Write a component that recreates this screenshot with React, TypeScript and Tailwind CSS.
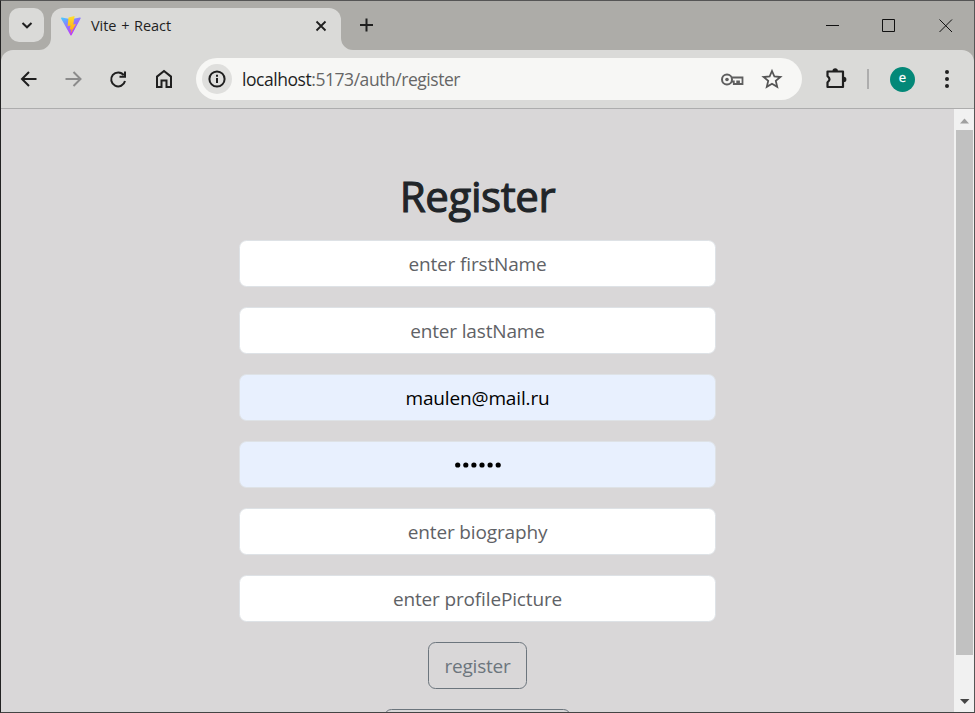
import type { ReactNode } from "react";

function Icon({ className = "", size = 24, children }: { className?: string; size?: number; children: ReactNode }) {
  return (
    <svg
      width={size}
      height={size}
      viewBox={`0 0 ${size} ${size}`}
      fill="none"
      stroke="currentColor"
      strokeWidth="2"
      className={`block shrink-0 ${className}`}
    >
      {children}
    </svg>
  );
}

function ViteLogo() {
  return (
    <svg width="20" height="20" viewBox="0 0 20 20" className="ml-[10px] block shrink-0">
      <defs>
        <linearGradient id="vite-body" x1="0" y1="0" x2="0.6" y2="1">
          <stop offset="0" stopColor="#41d1ff" />
          <stop offset="0.45" stopColor="#8f7bff" />
          <stop offset="1" stopColor="#c32bfa" />
        </linearGradient>
        <linearGradient id="vite-bolt" x1="0" y1="0" x2="0" y2="1">
          <stop offset="0" stopColor="#ffe02e" />
          <stop offset="1" stopColor="#ffa011" />
        </linearGradient>
      </defs>
      <path d="M19.6 2.5 10.5 19.2Q10 20 9.5 19.2L.1 2.6Q-.2 1.5.9 1.6L10 3.2 18.9 1.6Q20.2 1.4 19.6 2.5Z" fill="url(#vite-body)" />
      <path d="M13.6.1 7.5 1.4 6.6 10.200l2.900-.6-.9 4.200 2-.5-1.200 4.600 5.600-9.900-2.700.4Z" fill="url(#vite-bolt)" />
    </svg>
  );
}

function TabStrip() {
  return (
    <div className="flex h-[49px] shrink-0 bg-[#adaca8] pl-2">
      <button className="mt-[7px] grid h-[34px] w-[35px] shrink-0 place-items-center rounded-[10px] bg-[#dadad8] text-[#1f1f1f]">
        <Icon size={12}><path d="M1.5 4 6 8.3 10.5 4" /></Icon>
      </button>
      <div className="relative ml-[7px] mt-[7px] flex h-[42px] w-[290px] shrink-0 rounded-t-[12px] bg-[#dadad8] text-[#1f1f1f]">
        <svg width="12" height="12" className="absolute -left-3 bottom-0"><path d="M12 0A12 12 0 0 1 0 12H12Z" fill="#dadad8" /></svg>
        <svg width="12" height="12" className="absolute -right-3 bottom-0"><path d="M0 0A12 12 0 0 0 12 12H0Z" fill="#dadad8" /></svg>
        <div className="flex h-[35px] w-full items-center">
          <ViteLogo />
          <span className="ml-[10px] whitespace-nowrap text-[14.5px] tracking-[-0.05px] [word-spacing:1px]">Vite + React</span>
          <Icon size={12} className="ml-auto mr-[14px]"><path d="m1.5 1.5 9 9m0-9-9 9" strokeWidth="1.8" /></Icon>
        </div>
      </div>
      <Icon size={14} className="ml-[18px] mt-[17px] text-[#1f1f1f]"><path d="M7.500 .5v13M1 7h13" /></Icon>
      <svg width="128" height="14" viewBox="0 0 128 14" fill="none" stroke="#111" className="ml-auto mr-[20px] mt-[18px] block shrink-0">
        <path d="M0 6.5h13M56.5.5h12v12h-12ZM113.500 .5l12.500 12.500m0-12.500-12.500 12.500" />
      </svg>
    </div>
  );
}

function Toolbar() {
  return (
    <div className="h-[59px] shrink-0 bg-[#adaca8]">
      <div className="flex h-full items-center rounded-t-[12px] border-b border-[#adadad] bg-[#dadad8] text-[#1f1f1f]">
        <Icon className="ml-4"><path d="M19.5 12H5m7-7-7 7 7 7" /></Icon>
        <Icon className="ml-[20px] text-[#8b8b8b]"><path d="M4.500 12h15m-7-7 7 7-7 7" /></Icon>
        <Icon className="ml-[21px]"><path d="M17.8 8.2A7 7 0 1 0 19 14M19 4.5v5.2h-5.5" /></Icon>
        <Icon className="ml-[21.5px]"><path d="M5 9.6 12 4l7 5.6V20h-4.500v-6.500h-5V20H5Z" /></Icon>
        <div className="ml-[20.5px] flex h-[42px] w-[606px] shrink-0 items-center rounded-full bg-[#f7f7f5]">
          <div className="ml-[6px] grid h-[30px] w-[30px] place-items-center rounded-full bg-[#dfdfdd]">
            <Icon size={18}><circle cx="9" cy="9" r="7.6" /><path d="M9 8v5M9 4.8v1.9" /></Icon>
          </div>
          <span className="ml-[10px] whitespace-nowrap text-[17.5px] tracking-[-0.45px] text-[#666]">
            <span className="text-[#1f1f1f]">localhost</span>:5173/auth/register
          </span>
          <Icon className="ml-auto text-[#5f5f5f]">
            <circle cx="7" cy="12.500" r="5" />
            <circle cx="7" cy="12.500" r="1.8" fill="currentColor" stroke="none" />
            <path d="M11.500 10.500H22.500v6.500h-3.500v-2.500h-1.8v2.500h-3.400v-2.500h-2.3" strokeWidth="1.8" />
          </Icon>
          <Icon className="ml-[16px] mr-[18px] text-[#555]">
            <path d="m12 4 2.4 5.5 6 .5-4.600 3.900 1.4 5.900-5.200-3.100-5.200 3.100 1.4-5.900L3.600 10l6-.5Z" strokeWidth="1.8" />
          </Icon>
        </div>
        <Icon className="ml-[22px]">
          <path d="M3.500 4.500h15.500v15.500H3.500v-4.700q4-3.100 0-6.200Z" strokeWidth="2.2" strokeLinejoin="round" />
          <path d="M8.500 4a2.700 2.700 0 0 1 5.400 0ZM19.800 9.800a2.600 2.600 0 0 1 0 5.200Z" fill="currentColor" stroke="none" />
        </Icon>
        <div className="ml-[19px] h-5 w-[2px] bg-[#adadad]" />
        <div className="ml-[21px] grid h-[25px] w-[25px] shrink-0 place-items-center rounded-full bg-[#048878] text-[13px] leading-none text-white">
          <span className="-mt-[3px] [-webkit-text-stroke:0.3px_white]">e</span>
        </div>
        <Icon className="ml-5">
          <g fill="currentColor" stroke="none"><circle cx="12" cy="5" r="2" /><circle cx="12" cy="12" r="2" /><circle cx="12" cy="19" r="2" /></g>
        </Icon>
      </div>
    </div>
  );
}

const inputBase =
  "block h-[47px] w-[477px] rounded-[7.5px] border border-[#dee2e6] px-4 pt-[1px] text-center text-[19px] tracking-[-0.15px] outline-none placeholder:text-[#5f6266] placeholder:opacity-100";

function RegisterForm() {
  return (
    <form className="flex min-w-0 flex-1 flex-col items-center overflow-hidden bg-[#d9d7d8]">
      <h1 className="mt-[57px] h-[60px] whitespace-nowrap text-[42px] font-normal leading-[60px] tracking-[-0.4px] text-[#212529] [-webkit-text-stroke:1.1px_#212529]">Register</h1>
      <div className="mt-[14px] flex shrink-0 flex-col gap-5">
        <input className={`${inputBase} bg-white`} placeholder="enter firstName" />
        <input className={`${inputBase} bg-white`} placeholder="enter lastName" />
        <input className={`${inputBase} bg-[#e8f0fe] text-black`} defaultValue="maulen@mail.ru" />
        <div className={`${inputBase} flex items-center justify-center bg-[#e8f0fe]`}>
          <svg width="48" height="8" viewBox="0 0 48 8" className="-mt-[1px]">
            {[0, 1, 2, 3, 4, 5].map((i) => (
              <circle key={i} cx={3.7 + i * 8.1} cy="4" r="2.6" fill="#000" />
            ))}
          </svg>
        </div>
        <input className={`${inputBase} bg-white`} placeholder="enter biography" />
        <input className={`${inputBase} bg-white`} placeholder="enter profilePicture" />
      </div>
      <button type="button" className="mt-5 h-[47px] w-[99px] shrink-0 rounded-[7.5px] border border-[#6c757d] pt-[1px] text-[19px] tracking-[-0.2px] text-[#6c757d]">
        register
      </button>
      <button type="button" className="mt-5 h-[47px] w-[187px] shrink-0 rounded-[7.5px] border border-[#6c757d]" />
    </form>
  );
}

function Scrollbar() {
  return (
    <div className="flex w-5 shrink-0 flex-col bg-[#f1f1f1] pl-[2px]">
      <svg width="17" height="21" className="block shrink-0"><path d="M4 14.5h9L8.500 9.500Z" fill="#a0a0a0" /></svg>
      <div className="h-[525px] w-[17px] bg-[#c1c1c1]" />
      <svg width="17" height="20" className="mt-auto block shrink-0"><path d="M4 7h9.500L8.750 12Z" fill="#454545" /></svg>
    </div>
  );
}

export default function App() {
  return (
    <div className="flex h-[713px] w-[975px] flex-col overflow-hidden border border-t-[#555] border-l-[#222] border-r-[#555] border-b-[#444] bg-[#d9d7d8] font-['Open_Sans','Noto_Sans',sans-serif]">
      <TabStrip />
      <Toolbar />
      <div className="flex min-h-0 flex-1">
        <RegisterForm />
        <Scrollbar />
      </div>
    </div>
  );
}
